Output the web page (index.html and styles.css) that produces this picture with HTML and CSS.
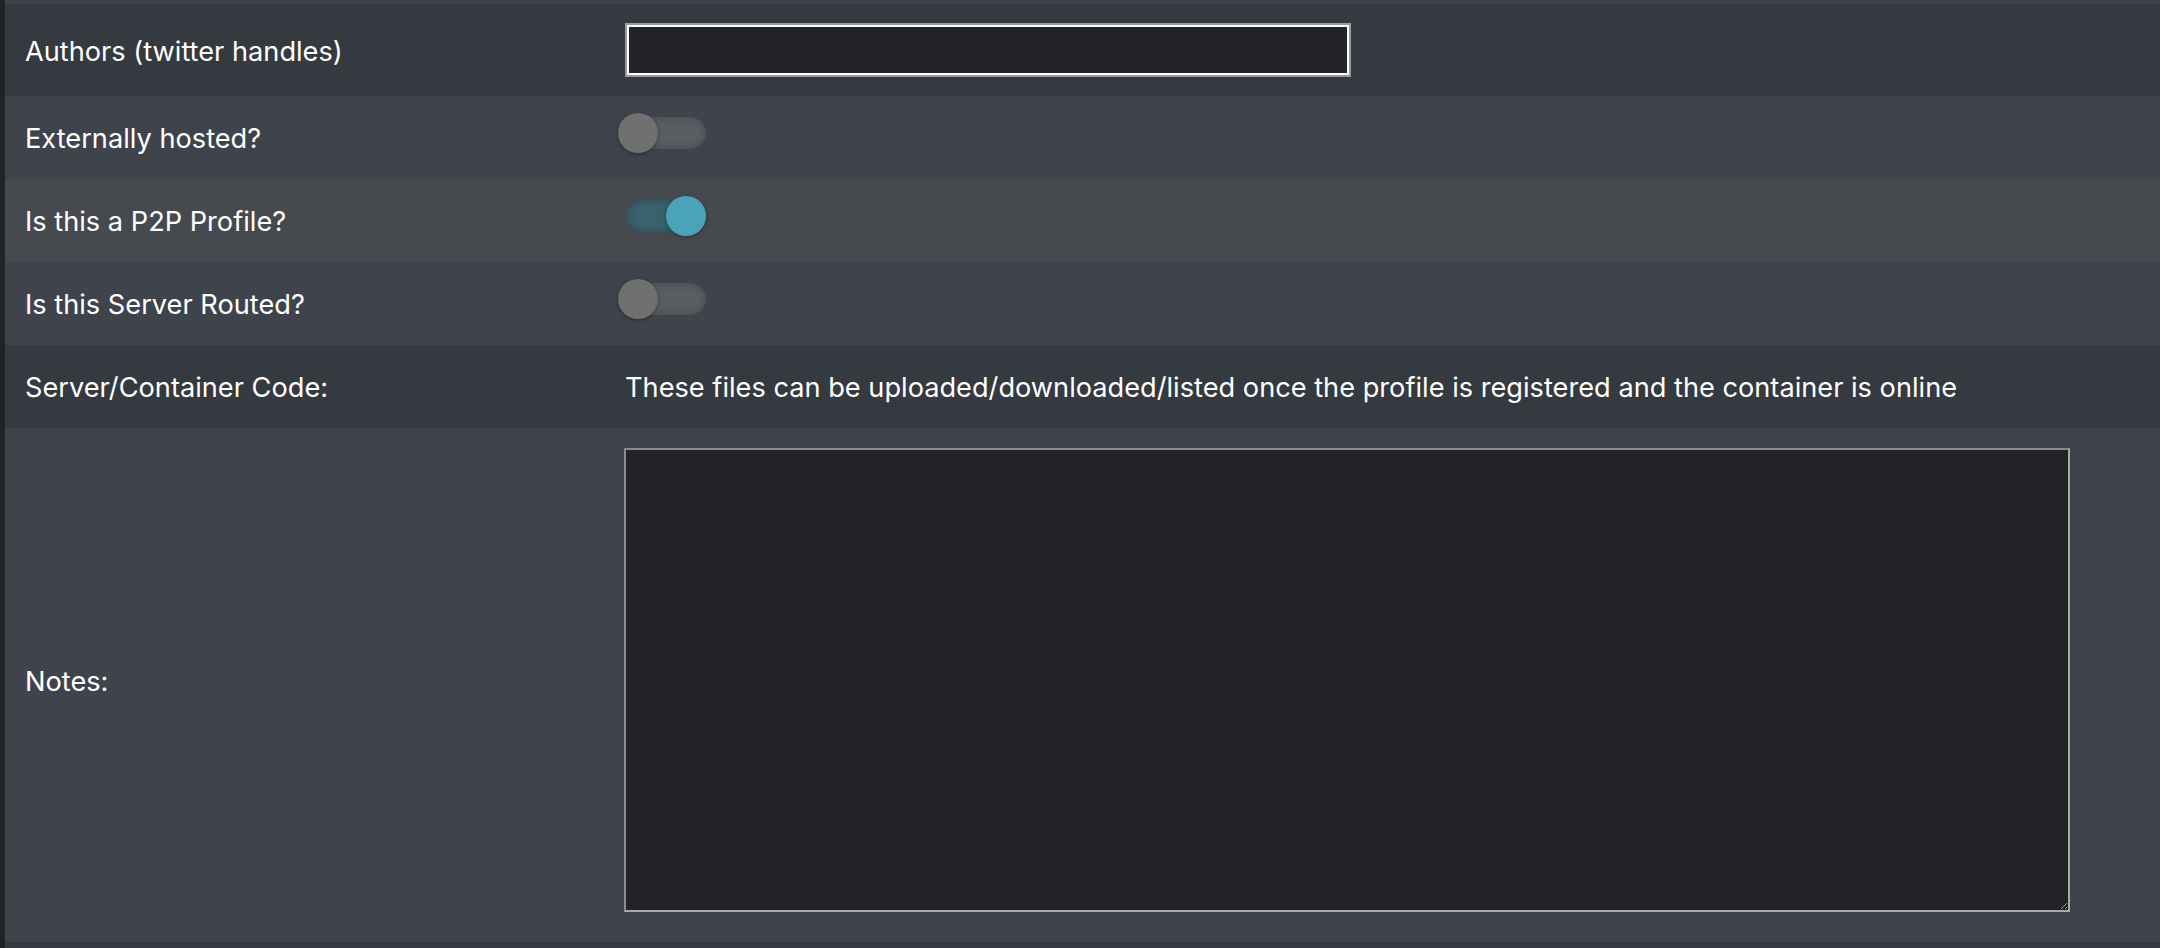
FILE: index.html
```html
<!DOCTYPE html>
<html lang="en">
<head>
<meta charset="utf-8">
<title>Profile form</title>
<link rel="stylesheet" href="styles.css">
</head>
<body>
<div class="page">
  <div class="form">
    <div class="row-tail odd"></div>
    <div class="row even row-input">
      <div class="label">Authors (twitter handles)</div>
      <div class="value"><input class="text-input" type="text"></div>
    </div>
    <div class="row odd">
      <div class="label">Externally hosted?</div>
      <div class="value"><span class="switch"><span class="track"></span><span class="knob"></span></span></div>
    </div>
    <div class="row hover">
      <div class="label">Is this a P2P Profile?</div>
      <div class="value"><span class="switch on"><span class="track"></span><span class="knob"></span></span></div>
    </div>
    <div class="row odd">
      <div class="label">Is this Server Routed?</div>
      <div class="value"><span class="switch"><span class="track"></span><span class="knob"></span></span></div>
    </div>
    <div class="row even">
      <div class="label">Server/Container Code:</div>
      <div class="value value-text">These files can be uploaded/downloaded/listed once the profile is registered and the container is online</div>
    </div>
    <div class="row odd row-notes">
      <div class="label">Notes:</div>
      <div class="value"><textarea class="notes"></textarea></div>
    </div>
    <div class="row-tail even"></div>
  </div>
</div>
</body>
</html>
```

FILE: styles.css
```css
html, body {
  margin: 0;
  padding: 0;
  background: #222326;
  height: 100%;
  overflow: hidden;
}

.page {
  padding-left: 5px;
  font-family: Inter, "Noto Sans", "Liberation Sans", sans-serif;
  font-size: 27.2px;
  color: #ffffff;
}

.form {
  display: flex;
  flex-direction: column;
}

.row-tail {
  height: 4px;
}
.row-tail.even { height: 20px; }

.odd { background: #3f444c; }
.even { background: #353940; }
.hover { background: #464a4f; }

.row {
  display: grid;
  grid-template-columns: 620px 1fr;
  align-items: center;
  min-height: 83px;
  box-sizing: border-box;
}

.row-input {
  min-height: 92px;
}

.label {
  padding-left: 20px;
  padding-top: 4px;
  line-height: 1.2;
}

.value {
  line-height: 1.2;
}

.value-text {
  padding-top: 4px;
}

.text-input {
  display: block;
  box-sizing: border-box;
  width: 722px;
  height: 50px;
  margin: 0 0 0 2px;
  background: #222327;
  border: 2px solid #ffffff;
  box-shadow: 0 0 0 2px #9b9b9b;
  outline: none;
  color: #fff;
  font: inherit;
}

.switch {
  position: relative;
  display: block;
  width: 90px;
  height: 40px;
  margin-bottom: 9px;
  margin-left: -7px;
}

.track {
  position: absolute;
  left: 8px;
  top: 4px;
  width: 80px;
  height: 32px;
  border-radius: 16px;
  background: #5a5d62;
  box-shadow: inset 0 0 8px rgba(0, 0, 0, 0.25);
}

.knob {
  position: absolute;
  left: 0;
  top: 0;
  width: 40px;
  height: 40px;
  border-radius: 50%;
  background: #707070;
  box-shadow: 0 1px 4px rgba(0, 0, 0, 0.35);
}

.switch.on .track {
  background: #3a626d;
}

.switch.on .knob {
  left: 48px;
  background: #4aa3b8;
}

.row-notes {
  padding: 20px 0 30px;
}

.notes {
  display: block;
  box-sizing: border-box;
  width: 1446px;
  height: 464px;
  margin: 0 0 0 -1px;
  background: #222327;
  border: 2px solid;
  border-color: #8b8b8b #a9a9a9 #a9a9a9 #8b8b8b;
  color: #fff;
  color-scheme: dark;
  resize: both;
  outline: none;
}
```
